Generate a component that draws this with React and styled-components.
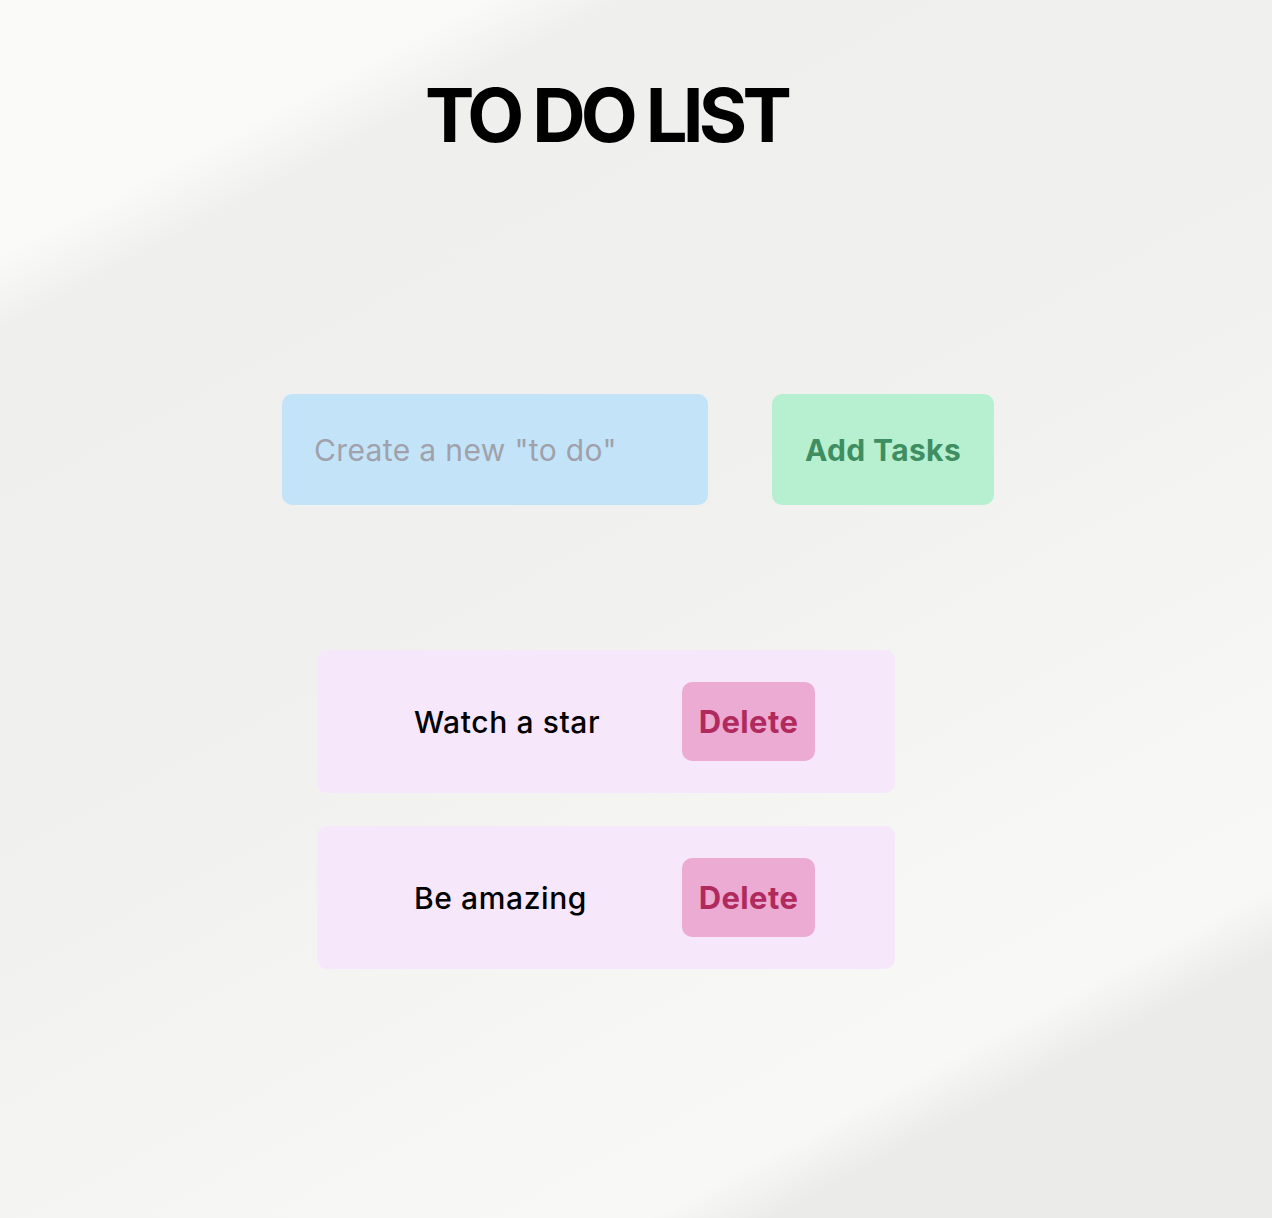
import React, { useState } from 'react';
import styled, { createGlobalStyle } from 'styled-components';

const GlobalStyle = createGlobalStyle`
  html, body {
    margin: 0;
    padding: 0;
  }
  body {
    font-family: Inter, "Noto Sans", sans-serif;
    background: #f1f1f0;
  }
`;

const Page = styled.div`
  min-height: 1218px;
  background: linear-gradient(
    152deg,
    #fafaf9 0%,
    #fafaf9 13.5%,
    #efefee 17.5%,
    #f0f0ef 45%,
    #f8f8f7 80%,
    #f8f8f7 82.5%,
    #ebebea 86%,
    #ebebea 100%
  );
`;

const Column = styled.main`
  width: 1212px;
  display: flex;
  flex-direction: column;
  align-items: center;
  padding-top: 70px;
`;

const Title = styled.h1`
  margin: 0;
  font-size: 74px;
  font-weight: 700;
  letter-spacing: -0.065em;
  line-height: 90px;
  color: #000;
`;

const Form = styled.form`
  display: flex;
  gap: 64px;
  margin-top: 234px;
  margin-left: 64px;
`;

const Input = styled.input`
  width: 426px;
  height: 111px;
  box-sizing: border-box;
  border: none;
  border-radius: 10px;
  background: #c3e4f8;
  padding: 0 32px;
  font-family: inherit;
  font-size: 30px;
  letter-spacing: 0.012em;
  color: #333;
  outline: none;

  &::placeholder {
    color: #a0a1ab;
  }
`;

const AddButton = styled.button`
  width: 222px;
  height: 111px;
  border: none;
  border-radius: 10px;
  background: #b7f0d0;
  color: #3f8e62;
  font-family: inherit;
  font-size: 30px;
  font-weight: 700;
  letter-spacing: 0.012em;
  cursor: pointer;
`;

const List = styled.ul`
  list-style: none;
  margin: 145px 0 0;
  padding: 0;
  display: flex;
  flex-direction: column;
  gap: 33px;
`;

const Item = styled.li`
  width: 578px;
  height: 143px;
  box-sizing: border-box;
  border-radius: 10px;
  background: #f6e7fb;
  display: grid;
  grid-template-columns: 268px auto;
  align-items: center;
  padding-left: 97px;
`;

const ItemText = styled.span`
  font-size: 30px;
  font-weight: 500;
  letter-spacing: 0.02em;
  color: #000;
`;

const DeleteButton = styled.button`
  width: 133px;
  height: 79px;
  border: none;
  border-radius: 10px;
  background: #ecabd2;
  color: #b02a5e;
  font-family: inherit;
  font-size: 31px;
  font-weight: 700;
  letter-spacing: 0.012em;
  cursor: pointer;
`;

export default function App() {
  const [todos, setTodos] = useState(['Watch a star', 'Be amazing']);
  const [text, setText] = useState('');

  const add = (e) => {
    e.preventDefault();
    if (!text.trim()) return;
    setTodos([...todos, text.trim()]);
    setText('');
  };

  return (
    <Page>
      <GlobalStyle />
      <Column>
        <Title>TO DO LIST</Title>
        <Form onSubmit={add}>
          <Input
            placeholder='Create a new "to do"'
            value={text}
            onChange={(e) => setText(e.target.value)}
          />
          <AddButton type="submit">Add Tasks</AddButton>
        </Form>
        <List>
          {todos.map((t, i) => (
            <Item key={i}>
              <ItemText>{t}</ItemText>
              <DeleteButton onClick={() => setTodos(todos.filter((_, j) => j !== i))}>
                Delete
              </DeleteButton>
            </Item>
          ))}
        </List>
      </Column>
    </Page>
  );
}
